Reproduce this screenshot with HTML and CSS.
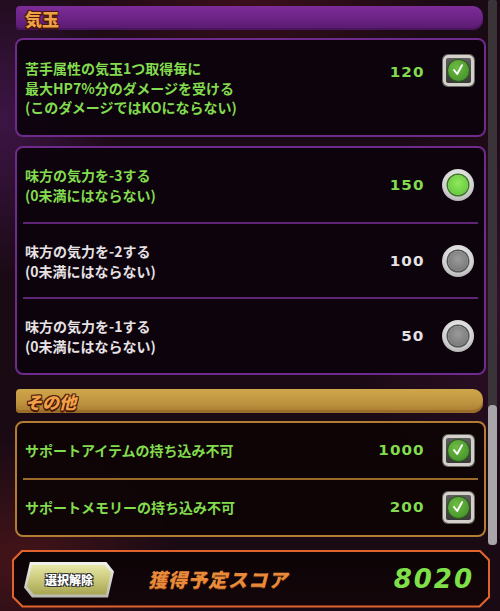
FILE: index.html
```html
<!DOCTYPE html>
<html lang="ja">
<head>
<meta charset="utf-8">
<link rel="stylesheet" href="styles.css">
</head>
<body>
<div class="screen">
  <div class="main">
    <div class="content">
      <div class="bar bar-purple"><span class="bar-title">気玉</span></div>
      <div class="card card-purple card-single">
        <div class="row row-tall">
          <div class="label green">苦手属性の気玉1つ取得毎に<br>最大HP7%分のダメージを受ける<br>(このダメージではKOにならない)</div>
          <div class="num green num-top">120</div>
          <div class="ctrl ctrl-top"><span class="check"><span class="check-dot"><svg viewBox="0 0 20 20" width="16" height="16"><path d="M5 10 L9 15 L15 4" fill="none" stroke="#fff" stroke-width="2.4" stroke-linecap="round" stroke-linejoin="round"/></svg></span></span></div>
        </div>
      </div>

      <div class="card card-purple">
        <div class="row row-radio">
          <div class="label green">味方の気力を-3する<br>(0未満にはならない)</div>
          <div class="num green">150</div>
          <div class="ctrl"><span class="radio"><span class="radio-dot on"></span></span></div>
        </div>
        <div class="divider purple-div"></div>
        <div class="row row-radio">
          <div class="label white">味方の気力を-2する<br>(0未満にはならない)</div>
          <div class="num white">100</div>
          <div class="ctrl"><span class="radio"><span class="radio-dot"></span></span></div>
        </div>
        <div class="divider purple-div"></div>
        <div class="row row-radio">
          <div class="label white">味方の気力を-1する<br>(0未満にはならない)</div>
          <div class="num white">50</div>
          <div class="ctrl"><span class="radio"><span class="radio-dot"></span></span></div>
        </div>
      </div>

      <div class="bar bar-gold"><span class="bar-title italic">その他</span></div>
      <div class="card card-gold">
        <div class="row row-short">
          <div class="label green">サポートアイテムの持ち込み不可</div>
          <div class="num green">1000</div>
          <div class="ctrl"><span class="check"><span class="check-dot"><svg viewBox="0 0 20 20" width="16" height="16"><path d="M5 10 L9 15 L15 4" fill="none" stroke="#fff" stroke-width="2.4" stroke-linecap="round" stroke-linejoin="round"/></svg></span></span></div>
        </div>
        <div class="divider gold-div"></div>
        <div class="row row-short row-last">
          <div class="label green">サポートメモリーの持ち込み不可</div>
          <div class="num green">200</div>
          <div class="ctrl"><span class="check"><span class="check-dot"><svg viewBox="0 0 20 20" width="16" height="16"><path d="M5 10 L9 15 L15 4" fill="none" stroke="#fff" stroke-width="2.4" stroke-linecap="round" stroke-linejoin="round"/></svg></span></span></div>
        </div>
      </div>
    </div>
    <div class="scrollbar"><div class="thumb"></div></div>
  </div>

  <div class="footer">
    <div class="footer-inner">
      <div class="btn"><div class="btn-inner"><span>選択解除</span></div></div>
      <div class="score-label">獲得予定スコア</div>
      <div class="score">8020</div>
    </div>
  </div>
</div>
</body>
</html>
```

FILE: styles.css
```css
html, body {
  margin: 0;
  padding: 0;
}
body {
  width: 500px;
  height: 611px;
  overflow: hidden;
  font-family: "Noto Sans CJK JP", "Noto Sans", sans-serif;
  background:
    radial-gradient(ellipse 120px 160px at 0px 120px, rgba(90, 30, 110, 0.55), transparent),
    radial-gradient(ellipse 160px 120px at 20px 560px, rgba(110, 30, 30, 0.5), transparent),
    radial-gradient(ellipse 200px 80px at 250px 0px, rgba(100, 20, 40, 0.45), transparent),
    radial-gradient(ellipse 160px 200px at 500px 300px, rgba(70, 20, 60, 0.5), transparent),
    #1a0a14;
}
.screen {
  display: flex;
  flex-direction: column;
  height: 611px;
}
.main {
  display: flex;
  padding: 6px 3px 0 15px;
  gap: 2px;
}
.content {
  width: 471px;
  display: flex;
  flex-direction: column;
}
.scrollbar {
  width: 9px;
  margin-top: -6px;
  margin-bottom: -8px;
  background: #3a3438;
  border-radius: 2px;
  display: flex;
  flex-direction: column;
  justify-content: flex-end;
}
.thumb {
  height: 140px;
  background: #a8a6a8;
  border-radius: 4px;
}

/* section bars */
.bar {
  height: 24px;
  margin: 0 3px 8px 1px;
  border-radius: 4px 10px 10px 4px;
  display: flex;
  align-items: center;
  padding-left: 9px;
}
.bar-purple {
  background: linear-gradient(#7d2c98 0%, #6a2284 55%, #571a6c 100%);
  box-shadow: inset 0 -2px 0 #4a1560;
}
.bar-gold {
  margin-top: 14px;
  background: linear-gradient(#cfa64a 0%, #bf9440 55%, #a87a30 100%);
  box-shadow: inset 0 -3px 0 #9a6d2a;
}
.bar-title {
  font-size: 17px;
  font-weight: 900;
  color: #f0a048;
  letter-spacing: 0;
  text-shadow: -1px -1px 0 #4a1a08, 1px -1px 0 #4a1a08, -1px 1px 0 #4a1a08, 1px 1px 0 #4a1a08, 0 2px 0 #3a1206;
}
.italic {
  font-style: italic;
}

/* cards */
.card {
  background: rgba(12, 3, 12, 0.96);
  border: 2px solid #6e2a8c;
  border-radius: 8px;
  display: flex;
  flex-direction: column;
}
.card + .card {
  margin-top: 9px;
}
.card-gold {
  border-color: #b27c32;
  background: rgba(14, 4, 6, 0.97);
}
.row {
  display: flex;
  align-items: center;
  padding: 0 10px 0 8px;
}
.row-tall {
  height: 95px;
  align-items: flex-start;
}
.row-tall .label {
  padding-top: 19px;
  line-height: 19.5px;
}
.row-radio {
  height: 73.7px;
}
.row-short {
  height: 54.5px;
}
.row-short.row-last {
  height: 55px;
}
.label {
  flex: 1;
  font-size: 14px;
  font-weight: 700;
  line-height: 20px;
  letter-spacing: 0;
}
.green {
  color: #82dc4e;
}
.white {
  color: #e6e2e4;
}
.num {
  font-family: "DejaVu Sans", sans-serif;
  font-weight: 700;
  font-size: 14px;
  letter-spacing: 1px;
  margin-right: 19px;
  transform: scaleX(1.08);
}
.num-top {
  margin-top: 24px;
}
.ctrl {
  width: 32px;
  height: 32px;
  display: flex;
  align-items: center;
  justify-content: center;
}
.ctrl-top {
  margin-top: 14px;
}

/* checkbox */
.check {
  width: 25px;
  height: 25px;
  border: 3px solid #d2d0c8;
  border-radius: 5px;
  background: linear-gradient(#5e5e5e, #3a3a3a);
  box-shadow: 0 0 0 1px #6a6a66;
  display: flex;
  align-items: center;
  justify-content: center;
}
.check-dot {
  width: 21px;
  height: 21px;
  border-radius: 50%;
  background: radial-gradient(circle at 40% 35%, #6cbc44, #3e8a24);
  box-shadow: 0 0 0 1px #2a5a1a;
  display: flex;
  align-items: center;
  justify-content: center;
}

/* radio */
.radio {
  width: 32px;
  height: 32px;
  border-radius: 50%;
  background: radial-gradient(circle at 50% 35%, #f4f4f4 0%, #cfcfcf 60%, #9a9a9a 100%);
  display: flex;
  align-items: center;
  justify-content: center;
}
.radio-dot {
  width: 20px;
  height: 20px;
  border-radius: 50%;
  background: radial-gradient(circle at 50% 40%, #9a9a9a, #707070);
  box-shadow: 0 0 0 1.5px #555;
}
.radio-dot.on {
  background: radial-gradient(circle at 50% 40%, #8fe85a, #5cc038);
  box-shadow: 0 0 0 1.5px #3d7a24;
}

/* dividers */
.divider {
  height: 2px;
  margin: 0 6px;
}
.purple-div {
  background: #5e2478;
}
.gold-div {
  background: #9a6a2a;
}

/* footer */
.footer {
  margin: 13px 10px 0 12px;
  height: 58px;
  background: #e0622c;
  clip-path: polygon(10px 0, calc(100% - 10px) 0, 100% 10px, 100% calc(100% - 10px), calc(100% - 10px) 100%, 10px 100%, 0 calc(100% - 10px), 0 10px);
  padding: 2px;
  box-sizing: border-box;
}
.footer-inner {
  height: 100%;
  background: linear-gradient(#0c0406, #14060a);
  clip-path: polygon(9px 0, calc(100% - 9px) 0, 100% 9px, 100% calc(100% - 9px), calc(100% - 9px) 100%, 9px 100%, 0 calc(100% - 9px), 0 9px);
  display: flex;
  align-items: center;
  padding: 0 14px 0 10px;
}
.btn {
  width: 90px;
  height: 36px;
  background: linear-gradient(#f2f2ee, #b8b8b0);
  clip-path: polygon(6px 0, calc(100% - 8px) 0, 100% 10px, calc(100% - 6px) 100%, 8px 100%, 0 calc(100% - 10px));
  padding: 3px;
  box-sizing: border-box;
  margin-top: 2px;
}
.btn-inner {
  height: 100%;
  background: linear-gradient(#e6e6a8 0%, #c9c878 50%, #a6a450 100%);
  clip-path: polygon(5px 0, calc(100% - 7px) 0, 100% 8px, calc(100% - 5px) 100%, 7px 100%, 0 calc(100% - 8px));
  display: flex;
  align-items: center;
  justify-content: center;
}
.btn-inner span {
  font-size: 12px;
  font-weight: 900;
  color: #ffffff;
  letter-spacing: 0;
  text-shadow: -1px -1px 0 #333, 1px -1px 0 #333, -1px 1px 0 #333, 1px 1px 0 #333;
}
.score-label {
  margin-left: 34px;
  font-size: 19px;
  font-weight: 900;
  font-style: italic;
  color: #e88a3a;
  letter-spacing: 1px;
  text-shadow: 0 1px 0 #5a2a10;
}
.score {
  margin-left: auto;
  font-family: "DejaVu Sans", sans-serif;
  font-weight: 700;
  font-style: italic;
  font-size: 26px;
  letter-spacing: 2px;
  color: #7fe04a;
}
```
